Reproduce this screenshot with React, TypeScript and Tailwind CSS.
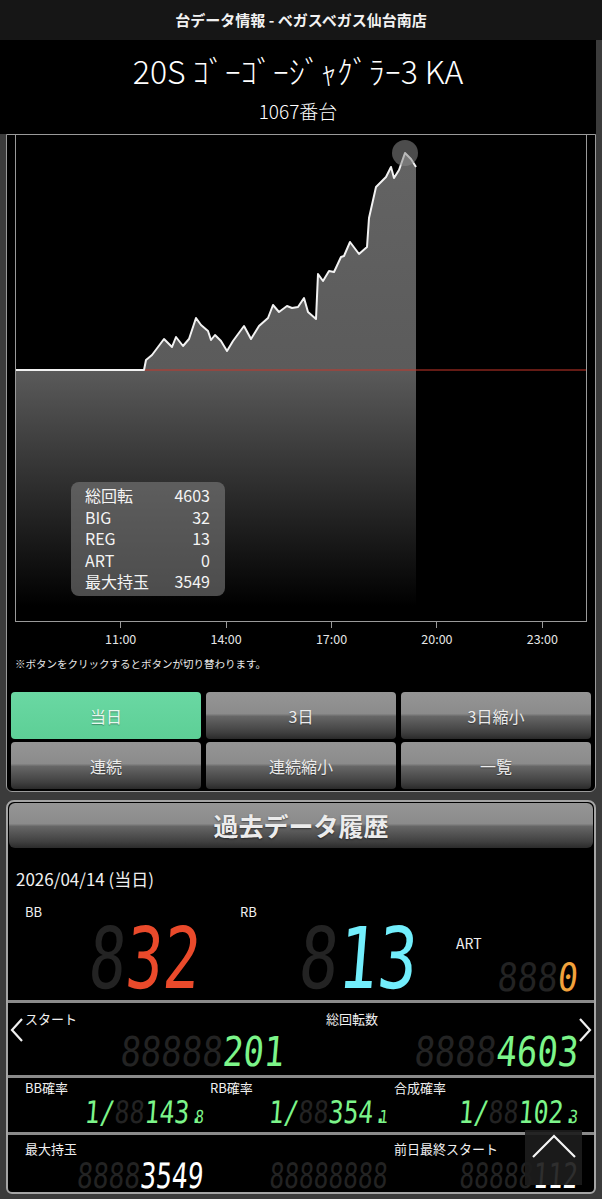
import React from "react";

const pts: [number, number][] = [
  [16, 370], [144, 370], [146, 360], [152, 355], [164, 339], [172, 347], [176, 337], [183, 346],
  [189, 339], [196, 318], [201, 325], [208, 331], [211, 340], [215, 335], [221, 341], [227, 351],
  [233, 341], [244, 326], [251, 339], [259, 326], [268, 318], [273, 305], [279, 312], [287, 306],
  [292, 308], [298, 307], [304, 298], [308, 312], [316, 319], [318, 274], [323, 281], [329, 271],
  [334, 272], [341, 257], [344, 256], [350, 242], [359, 254], [367, 247], [369, 218], [376, 187],
  [386, 177], [391, 167], [394, 178], [399, 170], [405, 153], [411, 159], [416, 167],
];

const line = pts.map((p) => p.join(",")).join(" ");
const area = line + " 416,621 16,621";

const stats: [string, string][] = [
  ["総回転", "4603"],
  ["BIG", "32"],
  ["REG", "13"],
  ["ART", "0"],
  ["最大持玉", "3549"],
];

const glossy =
  "bg-[linear-gradient(180deg,#959595_0%,#8b8b8b_46%,#666666_52%,#404040_86%,#2a2a2a_100%)]";

function Seg({ dim, cls, children }: { dim?: string; cls: string; children?: React.ReactNode }) {
  return (
    <span
      className={`inline-block origin-right -skew-x-6 whitespace-nowrap font-['DejaVu_Sans_Mono',monospace] leading-[0.75] ${cls}`}
    >
      {dim && <span className="text-[#232323]">{dim}</span>}
      {children}
    </span>
  );
}

function Chart() {
  return (
    <div className="relative mx-[8px] h-[487px] border-x border-b border-[#9a9a9a]">
      <svg width="570" height="486" viewBox="16 135 570 486" className="block">
        <defs>
          <linearGradient id="fill" gradientUnits="userSpaceOnUse" x1="0" y1="135" x2="0" y2="621">
            <stop offset="0" stopColor="#646464" />
            <stop offset="0.48" stopColor="#5b5b5b" />
            <stop offset="0.97" stopColor="#000000" />
          </linearGradient>
        </defs>
        <polygon points={area} fill="url(#fill)" />
        <line x1="16" y1="370" x2="586" y2="370" stroke="#c8372a" strokeWidth="1" />
        <polyline points={line} fill="none" stroke="#f2f2f2" strokeWidth="2" strokeLinejoin="round" />
        <circle cx="405" cy="153" r="13" fill="#8a8a8a" opacity="0.55" />
      </svg>
      <div className="absolute left-[55px] top-[347px] w-[154px] rounded-[8px] bg-[rgba(125,125,125,0.6)] py-[3px] pl-[14px] pr-[15px] text-[16px] leading-[21.5px] text-[#f4f4f4]">
        {stats.map(([k, v]) => (
          <div key={k} className="flex justify-between">
            <span>{k}</span>
            <span>{v}</span>
          </div>
        ))}
      </div>
    </div>
  );
}

function Btn({ label, on }: { label: string; on?: boolean }) {
  return (
    <div
      className={`flex h-[47px] items-center justify-center rounded-[4px] text-[16px] [text-shadow:0_1px_1px_rgba(0,0,0,0.35)] ${
        on
          ? "bg-[linear-gradient(180deg,#6ad8a3,#5dcf96)] text-[#e9f8f0]"
          : `${glossy} text-[#ececec]`
      }`}
    >
      {label}
    </div>
  );
}

function Chevron({ dir }: { dir: "l" | "r" }) {
  return (
    <svg width="14" height="26" viewBox="0 0 14 26" className="block">
      <polyline
        points={dir === "l" ? "12,2 2,13 12,24" : "2,2 12,13 2,24"}
        fill="none"
        stroke="#f0f0f0"
        strokeWidth="2.2"
      />
    </svg>
  );
}

export default function App() {
  const green = "text-[#7cf58a]";
  return (
    <div className="min-h-[1199px] bg-[#3b3b3b] font-['Noto_Sans_CJK_JP','Noto_Sans',sans-serif] text-white">
      <div className="flex h-[40px] items-center justify-center bg-[#161616] text-[15px] font-bold text-[#f2f2f2]">
        台データ情報 - ベガスベガス仙台南店
      </div>

      <div className="mr-[6px] flex h-[94px] flex-col items-center bg-black">
        <div className="mt-[11px] text-[32px] font-light leading-[38px]">20S ｺﾞｰｺﾞｰｼﾞｬｸﾞﾗｰ3 KA</div>
        <div className="mt-[10px] text-[19px] font-light leading-[24px]">1067番台</div>
      </div>

      <div className="mx-[6px] rounded-b-[6px] border border-[#9a9a9a] bg-black pb-[2px]">
        <Chart />
        <div className="flex pl-[61px]">
          {["11:00", "14:00", "17:00", "20:00", "23:00"].map((t) => (
            <div key={t} className="flex w-[107.5px] flex-col items-center">
              <div className="h-[6px] w-px bg-[#9a9a9a]" />
              <div className="mt-[4px] text-[12.5px] leading-[14px] text-[#e6e6e6]">{t}</div>
            </div>
          ))}
        </div>
        <div className="mt-[11px] pl-[8px] text-[10.5px] leading-[14px] text-[#e8e8e8]">
          ※ボタンをクリックするとボタンが切り替わります。
        </div>
        <div className="mt-[21px] grid grid-cols-3 gap-x-[5px] gap-y-[3px] px-[4px]">
          <Btn label="当日" on />
          <Btn label="3日" />
          <Btn label="3日縮小" />
          <Btn label="連続" />
          <Btn label="連続縮小" />
          <Btn label="一覧" />
        </div>
      </div>

      <div className="relative mx-[6px] mt-[8px] rounded-t-[8px] rounded-b-[6px] border-2 border-[#a5a5a5] bg-black">
        <div
          className={`mx-[1px] mt-[1px] flex h-[45px] items-center justify-center rounded-[6px] ${glossy} text-[25px] font-bold text-[#ececec] [text-shadow:0_1px_2px_rgba(0,0,0,0.5)]`}
        >
          過去データ履歴
        </div>
        <div className="pl-[8px] pt-[19px] text-[17px] leading-[24px] text-[#f0f0f0]">2026/04/14 (当日)</div>

        <div className="flex h-[109px] text-[13px] leading-[16px] text-[#f0f0f0]">
          <div className="flex w-[225px] flex-col">
            <div className="mt-[13px] pl-[17px]">BB</div>
            <div className="mt-[7px] flex justify-end pr-[32px]">
              <Seg dim="8" cls="text-[85px] scale-x-[0.725]">
                <span className="text-[#ea4a2b]">32</span>
              </Seg>
            </div>
          </div>
          <div className="flex w-[216px] flex-col">
            <div className="mt-[13px] pl-[7px]">RB</div>
            <div className="mt-[7px] flex justify-end pr-[31px]">
              <Seg dim="8" cls="text-[85px] scale-x-[0.77]">
                <span className="text-[#72eefc]">13</span>
              </Seg>
            </div>
          </div>
          <div className="flex flex-1 flex-col">
            <div className="mt-[44px] pl-[7px] text-[14px]">ART</div>
            <div className="mt-[12px] flex justify-end pr-[16px]">
              <Seg dim="888" cls="text-[39px] scale-x-[0.855]">
                <span className="text-[#f2a23c]">0</span>
              </Seg>
            </div>
          </div>
        </div>

        <div className="relative flex h-[75px] border-t-[3px] border-[#8a8a8a] text-[13px] leading-[16px] text-[#f0f0f0]">
          <div className="absolute left-[2px] top-[14px]">
            <Chevron dir="l" />
          </div>
          <div className="absolute right-[2px] top-[14px]">
            <Chevron dir="r" />
          </div>
          <div className="flex w-[294px] flex-col">
            <div className="mt-[8px] pl-[17px]">スタート</div>
            <div className="mt-[10px] flex justify-end pr-[18px]">
              <Seg dim="88888" cls="text-[41px] scale-x-[0.83]">
                <span className={green}>201</span>
              </Seg>
            </div>
          </div>
          <div className="flex flex-1 flex-col">
            <div className="mt-[8px] pl-[24px]">総回転数</div>
            <div className="mt-[10px] flex justify-end pr-[16px]">
              <Seg dim="8888" cls="text-[41px] scale-x-[0.83]">
                <span className={green}>4603</span>
              </Seg>
            </div>
          </div>
        </div>

        <div className="flex h-[57px] border-t-[3px] border-[#8a8a8a] text-[13px] leading-[16px] text-[#f0f0f0]">
          {[
            ["BB確率", "143", "8", "w-[198px] pl-[17px]", "pr-[2px]"],
            ["RB確率", "354", "1", "w-[184px] pl-[4px]", "pr-[2px]"],
            ["合成確率", "102", "3", "flex-1 pl-[4px]", "pr-[16px]"],
          ].map(([label, a, b, col, pr]) => (
            <div key={label} className={`flex flex-col ${col}`}>
              <div className="mt-[2px]">{label}</div>
              <div className={`mt-[5px] flex justify-end ${pr}`}>
                <Seg cls="text-[31px] scale-x-[0.8]">
                  <span className={green}>1/</span>
                  <span className="text-[#232323]">88</span>
                  <span className={green}>{a}</span>
                  <span className={`${green} tracking-[-0.35em]`}>.</span>
                  <span className={`${green} text-[18px]`}>{b}</span>
                </Seg>
              </div>
            </div>
          ))}
        </div>

        <div className="flex h-[60px] border-t-[3px] border-[#8a8a8a] text-[13px] leading-[16px] text-[#f0f0f0]">
          <div className="flex w-[198px] flex-col pl-[17px]">
            <div className="mt-[6px]">最大持玉</div>
            <div className="mt-[6px] flex justify-end pr-[2px]">
              <Seg dim="8888" cls="text-[35px] scale-x-[0.75]">
                <span className="text-white">3549</span>
              </Seg>
            </div>
          </div>
          <div className="flex w-[184px] flex-col pl-[4px]">
            <div className="mt-[6px] h-[16px]" />
            <div className="mt-[6px] flex justify-end pr-[2px]">
              <Seg dim="88888888" cls="text-[35px] scale-x-[0.70]" />
            </div>
          </div>
          <div className="flex flex-1 flex-col pl-[4px]">
            <div className="mt-[6px]">前日最終スタート</div>
            <div className="mt-[6px] flex justify-end pr-[16px]">
              <Seg dim="88888" cls="text-[35px] scale-x-[0.70]">
                <span className="text-white">112</span>
              </Seg>
            </div>
          </div>
        </div>

        <button className="absolute bottom-[7px] right-[12px] flex h-[55px] w-[57px] items-start justify-center bg-[rgba(28,28,28,0.92)] pt-[3px]">
          <svg width="48" height="26" viewBox="0 0 48 26">
            <polyline points="3,24 24,3 45,24" fill="none" stroke="#f4f4f4" strokeWidth="2.2" />
          </svg>
        </button>
      </div>
    </div>
  );
}
